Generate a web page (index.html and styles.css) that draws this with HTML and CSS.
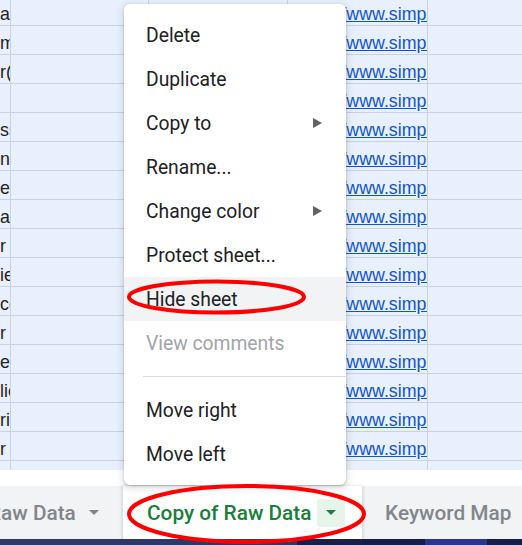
FILE: index.html
```html
<!DOCTYPE html>
<html>
<head>
<meta charset="utf-8">
<link rel="stylesheet" href="styles.css">
</head>
<body>
<div class="page">
  <div class="grid">
    <div class="rows">
      <div class="row"><div class="c c1">a</div><div class="c c2"></div><div class="c c3"></div><div class="c c4"><span class="link">https://www.simplilearn.com/</span></div><div class="c c5"></div></div>
      <div class="row"><div class="c c1">mp</div><div class="c c2"></div><div class="c c3"></div><div class="c c4"><span class="link">https://www.simplilearn.com/</span></div><div class="c c5"></div></div>
      <div class="row"><div class="c c1">r(</div><div class="c c2"></div><div class="c c3"></div><div class="c c4"><span class="link">https://www.simplilearn.com/</span></div><div class="c c5"></div></div>
      <div class="row"><div class="c c1"></div><div class="c c2"></div><div class="c c3"></div><div class="c c4"><span class="link">https://www.simplilearn.com/</span></div><div class="c c5"></div></div>
      <div class="row"><div class="c c1">ss</div><div class="c c2"></div><div class="c c3"></div><div class="c c4"><span class="link">https://www.simplilearn.com/</span></div><div class="c c5"></div></div>
      <div class="row"><div class="c c1">na</div><div class="c c2"></div><div class="c c3"></div><div class="c c4"><span class="link">https://www.simplilearn.com/</span></div><div class="c c5"></div></div>
      <div class="row"><div class="c c1">ev</div><div class="c c2"></div><div class="c c3"></div><div class="c c4"><span class="link">https://www.simplilearn.com/</span></div><div class="c c5"></div></div>
      <div class="row"><div class="c c1">ar</div><div class="c c2"></div><div class="c c3"></div><div class="c c4"><span class="link">https://www.simplilearn.com/</span></div><div class="c c5"></div></div>
      <div class="row"><div class="c c1">r (</div><div class="c c2"></div><div class="c c3"></div><div class="c c4"><span class="link">https://www.simplilearn.com/</span></div><div class="c c5"></div></div>
      <div class="row"><div class="c c1">ie</div><div class="c c2"></div><div class="c c3"></div><div class="c c4"><span class="link">https://www.simplilearn.com/</span></div><div class="c c5"></div></div>
      <div class="row"><div class="c c1">co</div><div class="c c2"></div><div class="c c3"></div><div class="c c4"><span class="link">https://www.simplilearn.com/</span></div><div class="c c5"></div></div>
      <div class="row"><div class="c c1">r s</div><div class="c c2"></div><div class="c c3"></div><div class="c c4"><span class="link">https://www.simplilearn.com/</span></div><div class="c c5"></div></div>
      <div class="row"><div class="c c1">e</div><div class="c c2"></div><div class="c c3"></div><div class="c c4"><span class="link">https://www.simplilearn.com/</span></div><div class="c c5"></div></div>
      <div class="row"><div class="c c1">lie</div><div class="c c2"></div><div class="c c3"></div><div class="c c4"><span class="link">https://www.simplilearn.com/</span></div><div class="c c5"></div></div>
      <div class="row"><div class="c c1">ria</div><div class="c c2"></div><div class="c c3"></div><div class="c c4"><span class="link">https://www.simplilearn.com/</span></div><div class="c c5"></div></div>
      <div class="row"><div class="c c1">r r</div><div class="c c2"></div><div class="c c3"></div><div class="c c4"><span class="link">https://www.simplilearn.com/</span></div><div class="c c5"></div></div>
      <div class="row"><div class="c c1"></div><div class="c c2"></div><div class="c c3"></div><div class="c c4"></div><div class="c c5"></div></div>
    </div>
  </div>
  <div class="hscroll"></div>
  <div class="tabs">
    <div class="tab tab-left"><span class="tab-label">Raw Data</span><svg class="caret" width="10" height="5" viewBox="0 0 10 5"><polygon points="0,0 10,0 5,5"/></svg></div>
    <div class="tab tab-active"><span class="tab-label">Copy of Raw Data</span><span class="drop"><svg class="caret" width="10" height="5" viewBox="0 0 10 5"><polygon points="0,0 10,0 5,5"/></svg></span></div>
    <div class="tab tab-other"><span class="tab-label">Keyword Map</span></div>
  </div>
  <div class="taskbar"><div class="seg s1"></div><div class="seg s2"></div><div class="seg s3"></div><div class="seg s4"></div></div>

  <div class="menu">
    <div class="item">Delete</div>
    <div class="item">Duplicate</div>
    <div class="item">Copy to<svg class="arrow" width="9" height="10" viewBox="0 0 9 10"><polygon points="0,0 9,5 0,10"/></svg></div>
    <div class="item">Rename...</div>
    <div class="item">Change color<svg class="arrow" width="9" height="10" viewBox="0 0 9 10"><polygon points="0,0 9,5 0,10"/></svg></div>
    <div class="item">Protect sheet...</div>
    <div class="item hover">Hide sheet</div>
    <div class="item disabled">View comments</div>
    <div class="sep"></div>
    <div class="item">Move right</div>
    <div class="item">Move left</div>
  </div>

  <svg class="marks" width="522" height="545" viewBox="0 0 522 545">
    <ellipse cx="216.5" cy="297" rx="87.5" ry="15.5"/>
    <ellipse cx="246.5" cy="514" rx="117.5" ry="28"/>
  </svg>
</div>
</body>
</html>
```

FILE: styles.css
```css
* { box-sizing: border-box; }
html, body { margin: 0; padding: 0; }
body {
  width: 522px;
  height: 545px;
  overflow: hidden;
  background: #fff;
  font-family: Roboto, "Liberation Sans", Arial, sans-serif;
}
.page {
  position: relative;
  width: 522px;
  height: 545px;
  display: flex;
  flex-direction: column;
  overflow: hidden;
}
.grid {
  height: 470px;
  overflow: hidden;
  background: #e8f0fd;
  flex: none;
}
.rows { margin-top: -3px; }
.row {
  display: grid;
  grid-template-columns: 11px 138px 139px 140px 1fr;
  height: 29px;
  border-bottom: 1px solid #c9d2de;
}
.c {
  border-right: 1px solid #c9d2de;
  overflow: hidden;
  white-space: nowrap;
  display: flex;
  align-items: flex-end;
  padding-bottom: 0;
  font-family: "Liberation Sans", Arial, sans-serif;
  font-size: 17.8px;
  color: #222;
}
.c5 { border-right: none; }
.c4 { padding-left: 5px; }
.link {
  color: #1155cc;
  text-decoration: underline;
}
.hscroll {
  height: 16px;
  flex: none;
  background: #fff;
}
.tabs {
  height: 53px;
  flex: none;
  background: #f1f3f4;
  display: flex;
  align-items: stretch;
}
.tab {
  display: flex;
  align-items: center;
  font-size: 20.8px;
  font-weight: 500;
  color: #80868b;
  white-space: nowrap;
  overflow: hidden;
}
.tab-left { width: 123px; }
.tab-left .tab-label { margin-left: -12px; }
.tab-left .caret { margin-left: 13px; fill: #80868b; flex: none; }
.tab-active {
  width: 239px;
  background: #fff;
  padding-left: 24px;
  color: #188038;
  box-shadow: 0 1px 3px 1px rgba(60, 64, 67, 0.18);
  position: relative;
  z-index: 1;
}
.drop {
  width: 28px;
  height: 28px;
  flex: none;
  margin-left: 6px;
  background: #e6f4ea;
  border-radius: 3px;
  display: flex;
  align-items: center;
  justify-content: center;
}
.drop .caret { fill: #188038; }
.tab-other { padding-left: 23px; }
.taskbar {
  height: 6px;
  flex: none;
  display: flex;
}
.seg { height: 100%; }
.s1 { width: 297px; background: #2f3769; }
.s2 { width: 128px; background: #181c4a; }
.s3 { width: 62px; background: #2b3591; }
.s4 { flex: 1; background: #181c4a; }

.menu {
  position: absolute;
  left: 124px;
  top: 4px;
  width: 222px;
  background: #fff;
  border-radius: 6px;
  padding: 9px 0 9px;
  box-shadow: 0 2px 6px 2px rgba(60, 64, 67, 0.15), 0 1px 2px 0 rgba(60, 64, 67, 0.3);
  z-index: 5;
}
.item {
  height: 44px;
  display: flex;
  align-items: center;
  justify-content: space-between;
  padding: 0 24px 0 22px;
  font-size: 19.3px;
  color: #202124;
  white-space: nowrap;
}
.item.hover { background: #f1f3f4; }
.item.disabled { color: #a0a4a9; }
.arrow { fill: #5f6368; flex: none; }
.sep {
  height: 1px;
  background: #dadce0;
  margin: 11px 0 11px 19px;
}
.marks {
  position: absolute;
  left: 0;
  top: 0;
  z-index: 10;
  pointer-events: none;
}
.marks ellipse {
  fill: none;
  stroke: #f00;
  stroke-width: 4;
}
```
